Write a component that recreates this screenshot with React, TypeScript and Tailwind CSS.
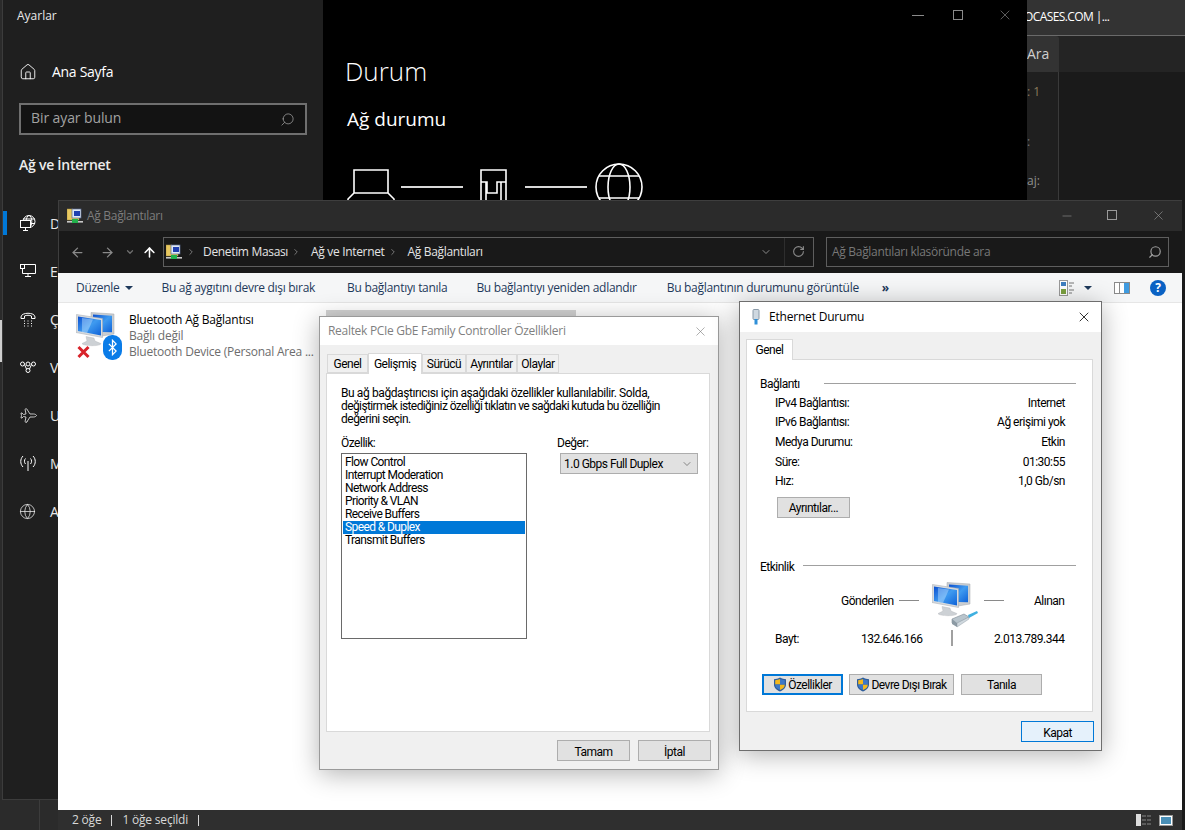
import { Home, Search, Globe, Plane, RotateCw, ArrowLeft, ArrowRight, ArrowUp, ChevronDown, ChevronRight, X, Minus } from 'lucide-react';

const SEGOE = "font-['Open_Sans',sans-serif]";
const DIALOG_FONT = "font-['Roboto',sans-serif]";

function FolderNet({ className }: { className?: string }) {
  return (
    <svg viewBox="0 0 16 16" className={className}>
      <path d="M0 1h6l1 1h5v10H0z" fill="#e8c860" stroke="#a89040" strokeWidth="0.5" />
      <rect x="5" y="1" width="9" height="9" fill="#dfe8f5" stroke="#5a6a90" strokeWidth="0.7" />
      <rect x="7" y="3" width="6" height="5" fill="#1f3fb0" />
      <rect x="0" y="13" width="16" height="1.6" fill="#c8c8c8" />
      <rect x="5" y="11" width="6" height="4" fill="#22b14c" />
    </svg>
  );
}

function Computers({ className, plug = false }: { className?: string; plug?: boolean }) {
  return (
    <svg viewBox="0 0 48 46" className={className}>
      <defs>
        <linearGradient id="scr" x1="0" y1="0" x2="1" y2="1">
          <stop offset="0" stopColor="#0a4fd0" />
          <stop offset="0.5" stopColor="#3f9bf0" />
          <stop offset="1" stopColor="#0f62d8" />
        </linearGradient>
      </defs>
      <path d="M15 0.5l23 1.5v20l-12 2-11-3z" fill="#c9cdd1" stroke="#a4a9ae" strokeWidth="0.5" />
      <path d="M17 2.5l19 1.2v16.6l-19-0.6z" fill="url(#scr)" />
      <path d="M0.5 2.5l26 4v19L0 20.5z" fill="#d6dade" stroke="#a4a9ae" strokeWidth="0.5" />
      <path d="M2 4.5l23 3.5v15.5L2 19z" fill="url(#scr)" />
      <path d="M6 6l11 1.6-6 13.5-5-1z" fill="#bfe0ff" opacity="0.45" />
      <path d="M10 24.5l8 1.6 1 3 6 2.5c0 3-18 2.6-19 0l5-2.5z" fill="#cdd1d5" stroke="#b0b4b8" strokeWidth="0.4" />
      {plug && (
        <g>
          <path d="M20 37l12-5 5 3-12 7-5-1z" fill="#b8c4cc" stroke="#7f8c96" strokeWidth="0.6" />
          <path d="M20 37v5l5 3v-4z" fill="#8c9aa4" />
          <path d="M25 41v4l12-8v-2z" fill="#cfd8de" stroke="#7f8c96" strokeWidth="0.4" />
          <path d="M36 33l9-4 1 2-9 5z" fill="#3fb0e0" />
        </g>
      )}
    </svg>
  );
}

function Shield() {
  return (
    <svg viewBox="0 0 14 15" className="w-[14px] h-[15px] shrink-0 -mt-[2px]">
      <path d="M7 0.5c2 1.3 4 1.7 6 1.7v5.3c0 3.4-2.6 5.6-6 7-3.4-1.4-6-3.6-6-7V2.2c2 0 4-.4 6-1.7z" fill="#2f5d9a" />
      <path d="M7 2v5.5H2.2V3.2C4 3.1 5.5 2.8 7 2z" fill="#f4b81c" />
      <path d="M7 7.5h4.8c0 2.8-2 4.4-4.8 5.6z" fill="#f4b81c" />
      <path d="M7 2c1.5.8 3 1.1 4.8 1.2v4.3H7z" fill="#3c78c8" />
      <path d="M7 7.5v5.6c-2.8-1.2-4.8-2.8-4.8-5.6z" fill="#3c78c8" />
    </svg>
  );
}

type ButtonTone = 'plain' | 'focused' | 'hover';

const BUTTON_TONES: Record<ButtonTone, string> = {
  plain: 'bg-[#e1e1e1] border border-[#adadad]',
  focused: 'bg-[#e1e1e1] border-2 border-[#0078d7]',
  hover: 'bg-[#e5f1fb] border border-[#0078d7]',
};

function WinButton({ children, className = '', shield = false, tone = 'plain' }: { children: string; className?: string; shield?: boolean; tone?: ButtonTone }) {
  return (
    <div className={`h-[21px] shrink-0 pt-[2px] flex items-center justify-center gap-[1px] text-[12px] text-black ${BUTTON_TONES[tone]} ${className}`}>
      {shield && <Shield />}
      {children}
    </div>
  );
}

function NavIcon({ index }: { index: number }) {
  if (index === 0) {
    return (
      <svg viewBox="0 0 16 17" className="w-[16px] h-[17px]" fill="none" stroke="white" strokeWidth="1">
        <circle cx="9" cy="6.5" r="6" />
        <ellipse cx="9" cy="6.5" rx="2.8" ry="6" />
        <path d="M3 4h12M3 8.5h12" />
        <rect x="0.5" y="5.5" width="10" height="7" fill="#1f1f1f" />
        <path d="M5.5 12.5v3M3 15.5h5" />
      </svg>
    );
  }
  if (index === 1) {
    return (
      <svg viewBox="0 0 16 14" className="w-[16px] h-[14px]" fill="none" stroke="white" strokeWidth="1">
        <path d="M5 0.5h10.5v9H2.5V5M5 12.5h6M8 9.5v3" />
        <rect x="0.5" y="0.5" width="4" height="4" />
      </svg>
    );
  }
  if (index === 2) {
    return (
      <svg viewBox="0 0 16 16" className="w-[16px] h-[16px]" fill="none" stroke="white" strokeWidth="1">
        <path d="M1 6c0-5 14-5 14 0v1.5h-3.5V5c-2-1-5-1-7 0v2.5H1z" />
        <path d="M4 10h1M7.5 10h1M11 10h1M4 12.5h1M7.5 12.5h1M11 12.5h1M4 15h1M7.5 15h1M11 15h1" />
      </svg>
    );
  }
  if (index === 3) {
    return (
      <svg viewBox="0 0 16 12" className="w-[16px] h-[12px]" fill="none" stroke="white" strokeWidth="1">
        <circle cx="2.5" cy="3" r="2" />
        <circle cx="13.5" cy="3" r="2" />
        <circle cx="8" cy="3" r="2" />
        <circle cx="8" cy="9.5" r="2" />
        <path d="M4.5 3.5L6.5 8M11.5 3.5L9.5 8" />
      </svg>
    );
  }
  if (index === 4) return <Plane size={17} strokeWidth={1.1} className="rotate-45" />;
  if (index === 5) {
    return (
      <svg viewBox="0 0 16 16" className="w-[16px] h-[16px]" fill="none" stroke="white" strokeWidth="1">
        <path d="M8 6v10M5.5 3.5c-1.4 1.4-1.4 4 0 5.5M10.5 3.5c1.4 1.4 1.4 4 0 5.5M3 1c-3 3-3 8 0 11M13 1c3 3 3 8 0 11" />
      </svg>
    );
  }
  return <Globe size={17} strokeWidth={1.1} />;
}

const NAV_LETTERS = ['D', 'E', 'Ç', 'V', 'U', 'M', 'A'];

function SettingsWindow() {
  return (
    <div className="absolute left-[2px] top-0 w-[1025px] h-[800px] flex">
      <div className="w-[321px] h-full bg-[#1f1f1f] border-l border-b border-[#3c3c3c] shrink-0 relative">
        <div className="pl-[14px] pt-[7px] text-[12px] leading-[18px] text-[#e8e8e8]">Ayarlar</div>
        <div className="flex items-center mt-[37px] pl-[16px] text-white text-[14px] leading-[20px] tracking-[-0.3px]">
          <Home size={18} strokeWidth={1.2} />
          <span className="ml-[15px]">Ana Sayfa</span>
        </div>
        <div className="mx-[16px] mt-[21px] h-[32px] border-2 border-[#6f6f6f] bg-[#131313] flex items-center justify-between px-[10px] text-[14px] leading-[20px] text-[#a2a2a2] tracking-[-0.1px]">
          <span className="-mt-[2px]">Bir ayar bulun</span>
          <Search size={15} strokeWidth={1.2} className="-scale-x-100" />
        </div>
        <div className="pl-[16px] mt-[20px] text-[14px] leading-[20px] font-semibold tracking-[-0.25px] text-[#ececec]">Ağ ve İnternet</div>
        <div className="mt-[24px]">
          {NAV_LETTERS.map((l, i) => (
            <div key={l} className="h-[48px] flex items-center pl-[16px] text-[14px] text-[#e8e8e8] relative">
              {i === 0 && <div className="absolute left-0 top-[12px] w-[4px] h-[24px] bg-[#0078d7]" />}
              <span className="w-[17px] h-[17px] flex items-center justify-center">
                <NavIcon index={i} />
              </span>
              <span className="ml-[14px]">{l}</span>
            </div>
          ))}
        </div>
      </div>
      <div className="flex-1 bg-black relative text-white overflow-hidden">
        <div className="pl-[22px] pt-[53px] text-[26px] leading-[36px] font-light">Durum</div>
        <div className="pl-[24px] mt-[18px] text-[19px] leading-[24px]">Ağ durumu</div>
        <div className="flex items-start pl-[24px] mt-[37px] h-[40px]">
          <svg viewBox="0 0 48 40" className="w-[48px] h-[40px] shrink-0" fill="none" stroke="white" strokeWidth="1.6">
            <path d="M7 2h34v23H7zM7 25L1 31v9M41 25l6 6v9" />
          </svg>
          <div className="w-[62px] h-[2px] bg-[#d8d8d8] ml-[6px] mt-[18px]" />
          <svg viewBox="0 0 28 40" className="w-[28px] h-[40px] ml-[16px] shrink-0" fill="none" stroke="white" strokeWidth="1.6">
            <path d="M2 40V2h25v38M2 14h6v11h10V14h9M7 14v26M22 14v26" />
          </svg>
          <div className="w-[62px] h-[2px] bg-[#d8d8d8] ml-[18px] mt-[18px]" />
          <svg viewBox="0 0 48 48" className="w-[48px] h-[48px] ml-[8px] -mt-[5px] shrink-0" fill="none" stroke="white" strokeWidth="1.6">
            <circle cx="24" cy="24" r="23" />
            <ellipse cx="24" cy="24" rx="11" ry="23" />
            <path d="M4 13h40M4 35h40" />
          </svg>
        </div>
        <div className="absolute left-[589px] top-[15px] w-[12px] h-px bg-[#8a8a8a]" />
        <div className="absolute left-[630px] top-[10px] w-[10px] h-[10px] border border-[#8a8a8a]" />
        <X size={16} strokeWidth={1} className="absolute left-[674px] top-[7px] text-[#8a8a8a]" />
      </div>
    </div>
  );
}

function BrowserBehind() {
  return (
    <div className="absolute left-[1027px] top-0 w-[158px] h-full bg-[#1a1a1a] overflow-hidden">
      <div className="h-[36px] bg-[#333333] border-b border-[#6a6a6a] text-white text-[12px] leading-[34px] tracking-[-0.6px] -ml-[3px] whitespace-nowrap">OCASES.COM |...</div>
      <div className="h-[36px] bg-[#242424]">
        <div className="w-[32px] h-full bg-[#333333] rounded-tr-[3px] text-[#cfcfcf] text-[14px] leading-[36px]">Ara</div>
      </div>
      <div className="w-[32px] h-[128px] bg-[#1f1f1f] border-r border-[#3a3a3a] text-[12px] leading-[18px] text-[#8b7a5c] pt-[11px] whitespace-nowrap">
        : 1
        <div className="mt-[32px] text-[#777]">:</div>
        <div className="mt-[21px] text-[#8f8f8f]">aj:</div>
      </div>
    </div>
  );
}

function ExplorerWindow() {
  return (
    <div className={`absolute left-[58px] top-[200px] w-[1124px] h-[630px] flex flex-col ${SEGOE}`}>
      <div className="h-[31px] bg-[#2b2b2b] flex items-center pl-[8px] text-[12px] tracking-[-0.3px] text-[#7d7d7d] relative border-t border-l border-[#3e3e3e]">
        <FolderNet className="w-[16px] h-[16px]" />
        <span className="ml-[4px]">Ağ Bağlantıları</span>
        <Minus size={14} strokeWidth={1} className="absolute right-[108px] top-[8px] text-[#9a9a9a]" />
        <div className="absolute right-[65px] top-[9px] w-[10px] h-[10px] border border-[#9a9a9a]" />
        <X size={15} strokeWidth={1} className="absolute right-[16px] top-[7px] text-[#9a9a9a]" />
      </div>
      <div className="h-[42px] bg-[#191919] flex items-center pl-[11px] pr-[13px] border-l border-[#3e3e3e]">
        <ArrowLeft size={15} strokeWidth={2} className="text-[#8a8a8a]" />
        <ArrowRight size={15} strokeWidth={2} className="text-[#8a8a8a] ml-[15px]" />
        <ChevronDown size={10} strokeWidth={3} className="text-[#6e6e6e] ml-[10px]" />
        <ArrowUp size={15} strokeWidth={2.5} className="text-white ml-[7px]" />
        <div className="ml-[6px] w-[651px] h-[30px] border border-[#5e5e5e] flex items-center pl-[2px] text-[12px] tracking-[-0.33px] text-[#e4e4e4] relative">
          <FolderNet className="w-[16px] h-[16px]" />
          <ChevronRight size={10} className="text-[#888] ml-[4px]" />
          <span className="ml-[7px]">Denetim Masası</span>
          <ChevronRight size={10} className="text-[#888] ml-[3px]" />
          <span className="ml-[10px]">Ağ ve Internet</span>
          <ChevronRight size={10} className="text-[#888] ml-[3px]" />
          <span className="ml-[10px]">Ağ Bağlantıları</span>
          <ChevronDown size={12} strokeWidth={2} className="absolute left-[596px] top-[8px] text-[#8a8a8a]" />
          <div className="absolute left-[620px] top-0 h-full w-px bg-[#2e2e2e]" />
          <RotateCw size={13} strokeWidth={2} className="absolute left-[628px] top-[7px] text-[#8a8a8a]" />
        </div>
        <div className="ml-[12px] flex-1 h-[30px] border border-[#5e5e5e] flex items-center justify-between pl-[5px] pr-[6px] text-[12px] tracking-[-0.3px] text-[#787878]">
          <span>Ağ Bağlantıları klasöründe ara</span>
          <Search size={14} strokeWidth={2} className="text-[#a0a0a0] -scale-x-100" />
        </div>
      </div>
      <div className="h-[30px] bg-[#f5f6f7] border-b border-[#e6e6e6] flex items-center text-[12px] tracking-[-0.3px] text-[#1e395b] pl-[18px] pr-[16px]">
        <span>Düzenle</span>
        <span className="ml-[6px] w-0 h-0 border-x-[4px] border-x-transparent border-t-[4px] border-t-[#1e395b]" />
        <span className="ml-[28px]">Bu ağ aygıtını devre dışı bırak</span>
        <span className="ml-[32px]">Bu bağlantıyı tanıla</span>
        <span className="ml-[29px]">Bu bağlantıyı yeniden adlandır</span>
        <span className="ml-[30px]">Bu bağlantının durumunu görüntüle</span>
        <span className="ml-[23px] font-bold">»</span>
        <div className="ml-auto flex items-center">
          <svg viewBox="0 0 16 16" className="w-[16px] h-[16px]">
            <rect x="0.5" y="0.5" width="8" height="15" fill="#fff" stroke="#999" />
            <rect x="2" y="2" width="5" height="4" fill="#3f7fc0" />
            <rect x="2" y="9" width="5" height="5" fill="#7ba040" />
            <path d="M10 3h5M10 6h3M10 10h5M10 13h3" stroke="#777" />
          </svg>
          <span className="ml-[9px] w-0 h-0 border-x-[4px] border-x-transparent border-t-[4px] border-t-[#1e395b]" />
          <svg viewBox="0 0 16 12" className="ml-[22px] w-[16px] h-[12px]">
            <rect x="0.5" y="0.5" width="15" height="11" fill="#fff" stroke="#8a8a8a" />
            <rect x="5" y="1" width="1" height="10" fill="#8a8a8a" />
            <rect x="10" y="1" width="5" height="10" fill="#3f9be0" />
          </svg>
          <div className="ml-[20px] w-[16px] h-[16px] rounded-full bg-[#0a62c4] text-white text-[12px] font-bold flex items-center justify-center">?</div>
        </div>
      </div>
      <div className="flex-1 bg-white pl-[18px] pt-[9px] flex items-start relative">
        <div className="relative w-[48px] h-[48px] shrink-0">
          <Computers className="w-[48px] h-[46px]" />
          <svg viewBox="0 0 14 14" className="absolute left-0 top-[33px] w-[15px] h-[14px]">
            <path d="M2 2l10 10M12 2L2 12" stroke="#d8232a" strokeWidth="3" />
          </svg>
          <div className="absolute left-[27px] top-[23px] w-[19px] h-[25px] rounded-[9px] bg-[#0a7ce8] flex items-center justify-center">
            <svg viewBox="0 0 10 18" className="w-[9px] h-[17px]" fill="none" stroke="white" strokeWidth="1.4">
              <path d="M1 5l8 8-4 4V1l4 4-8 8" />
            </svg>
          </div>
        </div>
        <div className="ml-[5px] text-[12px] leading-[16px] tracking-[-0.22px] whitespace-nowrap">
          <div className="text-black">Bluetooth Ağ Bağlantısı</div>
          <div className="text-[#6d6d6d]">Bağlı değil</div>
          <div className="text-[#6d6d6d]">Bluetooth Device (Personal Area ...</div>
        </div>
        <div className="absolute left-[268px] top-[7px] w-[250px] h-[10px] bg-[#d2d2d2]" />
      </div>
      <div className="h-[20px] bg-[#2f2f2f] flex items-center pl-[14px] text-[12px] tracking-[-0.2px] text-[#d8d8d8] relative">
        <span>2 öğe</span>
        <span className="ml-[10px] w-px h-[11px] bg-[#d8d8d8]" />
        <span className="ml-[10px]">1 öğe seçildi</span>
        <span className="ml-[10px] w-px h-[11px] bg-[#d8d8d8]" />
        <svg viewBox="0 0 16 12" className="absolute left-[1078px] top-[4px] w-[16px] h-[12px]">
          <rect x="0" y="0" width="5" height="12" fill="#ddd" />
          <path d="M6 2h4M11 2h4M6 6h4M11 6h4M6 10h4M11 10h4" stroke="#888" />
        </svg>
        <svg viewBox="0 0 14 11" className="absolute left-[1101px] top-[5px] w-[14px] h-[11px]">
          <rect x="0.5" y="0.5" width="13" height="10" fill="#fff" stroke="#999" />
          <rect x="2" y="2" width="10" height="7" fill="#4a90b8" />
        </svg>
      </div>
    </div>
  );
}

const REALTEK_TABS = [
  { label: 'Genel', width: 'w-[41px]' },
  { label: 'Gelişmiş', width: 'w-[54px]', active: true },
  { label: 'Sürücü', width: 'w-[44px]' },
  { label: 'Ayrıntılar', width: 'w-[51px]' },
  { label: 'Olaylar', width: 'w-[42px]' },
];

const PROPERTIES = ['Flow Control', 'Interrupt Moderation', 'Network Address', 'Priority & VLAN', 'Receive Buffers', 'Speed & Duplex', 'Transmit Buffers'];

function RealtekDialog() {
  return (
    <div className={`absolute left-[319px] top-[316px] w-[400px] h-[454px] bg-[#f0f0f0] border border-[#9a9a9a] shadow-[0_4px_24px_rgba(0,0,0,0.3)] flex flex-col ${DIALOG_FONT} text-[12px] tracking-[-0.5px] text-black`}>
      <div className={`h-[28px] bg-white flex items-center justify-between pl-[8px] pr-[10px] text-[#7f7f7f] ${SEGOE} tracking-[-0.3px]`}>
        <span>Realtek PCIe GbE Family Controller Özellikleri</span>
        <X size={15} strokeWidth={1} className="text-[#7f7f7f]" />
      </div>
      <div className="flex items-end pl-[7px] mt-[8px] h-[20px]">
        {REALTEK_TABS.map((t) => (
          <div key={t.label} className={`${t.width} ${t.active ? 'h-[21px] bg-white border-b-0 relative z-10 -mb-px' : 'h-[19px] bg-[#f0f0f0]'} border border-[#d9d9d9] flex items-center justify-center`}>
            {t.label}
          </div>
        ))}
      </div>
      <div className="mx-[6px] w-[384px] h-[359px] bg-white border border-[#d9d9d9] px-[14px] pt-[13px]">
        <div className="leading-[13px] whitespace-nowrap">
          <div className="tracking-[-0.4px]">Bu ağ bağdaştırıcısı için aşağıdaki özellikler kullanılabilir. Solda,</div>
          <div className="tracking-[-0.6px]">değiştirmek istediğiniz özelliği tıklatın ve sağdaki kutuda bu özelliğin</div>
          <div>değerini seçin.</div>
        </div>
        <div className="flex mt-[9px]">
          <div className="w-[186px] shrink-0">
            <div className="leading-[16px] h-[18px]">Özellik:</div>
            <div className="h-[186px] border border-[#6a6a6a] p-px pt-[2px] tracking-[-0.6px]">
              {PROPERTIES.map((p) => (
                <div key={p} className={`h-[13px] leading-[13px] pl-[2px] ${p === 'Speed & Duplex' ? 'bg-[#0078d7] text-white' : ''}`}>{p}</div>
              ))}
            </div>
          </div>
          <div className="ml-[30px] w-[141px] shrink-0">
            <div className="leading-[16px] h-[18px]">Değer:</div>
            <div className="ml-[3px] h-[21px] bg-[#e1e1e1] border border-[#adadad] flex items-center justify-between px-[3px] pr-[4px]">
              <span>1.0 Gbps Full Duplex</span>
              <ChevronDown size={12} strokeWidth={1.2} className="text-[#444]" />
            </div>
          </div>
        </div>
      </div>
      <div className="flex justify-end gap-[8px] pr-[7px] mt-[8px]">
        <WinButton className="w-[73px]">Tamam</WinButton>
        <WinButton className="w-[73px]">İptal</WinButton>
      </div>
    </div>
  );
}

const ETHERNET_ROWS = [
  ['IPv4 Bağlantısı:', 'Internet'],
  ['IPv6 Bağlantısı:', 'Ağ erişimi yok'],
  ['Medya Durumu:', 'Etkin'],
  ['Süre:', '01:30:55'],
  ['Hız:', '1,0 Gb/sn'],
];

function EthernetDialog() {
  return (
    <div className={`absolute left-[739px] top-[301px] w-[363px] h-[450px] bg-[#f0f0f0] border border-[#6e6e6e] shadow-[0_4px_24px_rgba(0,0,0,0.3)] flex flex-col text-[12px] text-black ${DIALOG_FONT} tracking-[-0.5px]`}>
      <div className={`h-[30px] bg-white flex items-center pl-[12px] pr-[9px] shrink-0 ${SEGOE} tracking-[-0.2px]`}>
        <svg viewBox="0 0 8 16" className="w-[8px] h-[16px]">
          <rect x="1" y="0.5" width="6" height="10" rx="1" fill="#cfd8e0" stroke="#8a9aa8" />
          <rect x="2.5" y="10" width="3" height="5.5" fill="#2f8fd8" />
        </svg>
        <span className="ml-[9px] flex-1">Ethernet Durumu</span>
        <X size={16} strokeWidth={1.2} />
      </div>
      <div className="pl-[6px] mt-[7px] h-[20px] flex items-end">
        <div className="w-[47px] h-[21px] bg-white border border-[#d9d9d9] border-b-0 -mb-px relative z-10 flex items-center justify-center">Genel</div>
      </div>
      <div className="mx-[6px] w-[347px] h-[353px] bg-white border border-[#d9d9d9] px-[13px] pt-[14px]">
        <div className="flex items-center h-[18px]">
          <span className="w-[64px] pt-[2px]">Bağlantı</span>
          <div className="w-[252px] h-px bg-[#a0a0a0]" />
        </div>
        <div className="pl-[15px] pr-[14px]">
          {ETHERNET_ROWS.map(([k, v]) => (
            <div key={k} className="h-[19.6px] pt-[2px] flex items-center justify-between">
              <span>{k}</span>
              <span>{v}</span>
            </div>
          ))}
          <WinButton className="w-[73px] mt-[7px] ml-[2px]">Ayrıntılar...</WinButton>
        </div>
        <div className="flex items-center h-[18px] mt-[39px]">
          <span className="w-[43px] pt-[2px]">Etkinlik</span>
          <div className="w-[273px] h-px bg-[#a0a0a0]" />
        </div>
        <div className="flex items-start h-[46px] mt-[7px]">
          <span className="ml-[81px] mt-[10px] w-[51px] whitespace-nowrap">Gönderilen</span>
          <div className="ml-[7px] mt-[18px] w-[20px] h-px bg-[#8a8a8a]" />
          <Computers plug className="ml-[13px] w-[48px] h-[46px] shrink-0" />
          <div className="ml-[4px] mt-[18px] w-[20px] h-px bg-[#8a8a8a]" />
          <span className="ml-[30px] mt-[10px]">Alınan</span>
        </div>
        <div className="flex items-center h-[18px] mt-[1px]">
          <span className="ml-[15px] w-[86px] pt-[2px]">Bayt:</span>
          <span className="w-[61px] pt-[2px] whitespace-nowrap">132.646.166</span>
          <div className="ml-[29px] w-[2px] h-[16px] bg-[#a0a0a0]" />
          <span className="ml-[41px] pt-[2px] whitespace-nowrap">2.013.789.344</span>
        </div>
        <div className="flex mt-[27px] ml-[2px]">
          <WinButton shield tone="focused" className="w-[81px]">Özellikler</WinButton>
          <WinButton shield className="w-[105px] ml-[6px]">Devre Dışı Bırak</WinButton>
          <WinButton className="w-[81px] ml-[7px]">Tanıla</WinButton>
        </div>
      </div>
      <div className="flex justify-end pr-[7px] mt-[9px]">
        <WinButton tone="hover" className="w-[73px]">Kapat</WinButton>
      </div>
    </div>
  );
}

export default function App() {
  return (
    <div className={`relative w-[1185px] h-[830px] overflow-hidden bg-[#2b2b2b] ${SEGOE}`}>
      <BrowserBehind />
      <SettingsWindow />
      {/* bits of other windows that stick out on the left edge */}
      <div className="absolute left-0 top-[320px] w-[2px] h-[42px] bg-[#cfcfcf]" />
      <div className="absolute left-[39px] top-[800px] w-px h-[30px] bg-[#3c3c3c]" />
      <ExplorerWindow />
      <RealtekDialog />
      <EthernetDialog />
    </div>
  );
}
